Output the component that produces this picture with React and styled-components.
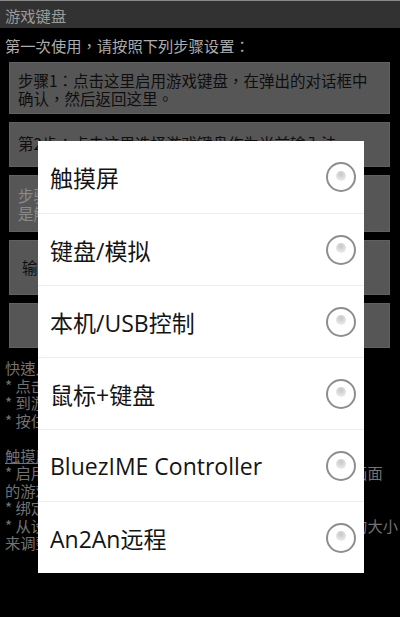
import React from "react";
import styled, { createGlobalStyle } from "styled-components";

const GlobalStyle = createGlobalStyle`
  html, body { margin: 0; padding: 0; background: #000; }
  body { font-family: "Noto Sans CJK TC", "Noto Sans", sans-serif; }
  * { box-sizing: border-box; }
`;

const Page = styled.div`
  position: relative;
  width: 400px;
  height: 617px;
  background: #000;
  overflow: hidden;
`;

const TitleBar = styled.div`
  height: 28px;
  background: #323232;
  border-top: 1px solid #8a8a8a;
  display: flex;
  align-items: center;
  padding-left: 5px;
  color: #9a9a9a;
  font-size: 15.3px;
`;

const Content = styled.div`
  padding: 0 10px 0 5px;
`;

const Intro = styled.div`
  margin-top: 8px;
  line-height: 18px;
  font-size: 15.3px;
  color: #acacac;
  white-space: nowrap;
`;

const StepList = styled.div`
  margin: 8px 0 0 4px;
  display: flex;
  flex-direction: column;
  gap: 8px;
`;

const StepBox = styled.div`
  background: #565656;
  border: 1px solid #616161;
  padding: ${(p) => p.$pad};
  min-height: ${(p) => p.$h}px;
  font-size: 15.5px;
  line-height: 18px;
  color: ${(p) => (p.$disabled ? "#8a8a8a" : "#0e0e0e")};
  text-align: ${(p) => (p.$center ? "center" : "left")};
  white-space: nowrap;
  overflow: hidden;
`;

const Help = styled.div`
  margin-top: 11px;
  font-size: 15.3px;
  line-height: 17.5px;
  color: #727272;
`;

const HelpLine = styled.div`
  white-space: nowrap;
  height: 17.5px;
  text-decoration: ${(p) => (p.$underline ? "underline" : "none")};
`;

const Dialog = styled.div`
  position: absolute;
  top: 141px;
  left: 38px;
  width: 326px;
  background: #fff;
  display: flex;
  flex-direction: column;
`;

const Option = styled.div`
  height: 72px;
  display: flex;
  align-items: center;
  justify-content: space-between;
  padding: 0 8px 0 12px;
  border-top: ${(p) => (p.$first ? "none" : "1px solid #ededed")};
  font-family: "Open Sans", "Noto Sans CJK SC", sans-serif;
  font-size: 23px;
  color: #141414;
`;

const Radio = styled.span`
  width: 30px;
  height: 30px;
  border-radius: 50%;
  border: 2px solid #8e8e8e;
  display: flex;
  align-items: center;
  justify-content: center;
  flex-shrink: 0;
  &::after {
    content: "";
    width: 10px;
    height: 10px;
    border-radius: 50%;
    margin-top: -3px;
    margin-left: -1px;
    background: radial-gradient(circle at 50% 30%, #c6c6c6 0%, #dedede 50%, #f6f6f6 100%);
  }
`;

const options = [
  "触摸屏",
  "键盘/模拟",
  "本机/USB控制",
  "鼠标+键盘",
  "BluezIME Controller",
  "An2An远程",
];

export default function App() {
  return (
    <Page>
      <GlobalStyle />
      <TitleBar>游戏键盘</TitleBar>
      <Content>
        <Intro>第一次使用，请按照下列步骤设置：</Intro>
        <StepList>
          <StepBox $pad="8px 8px 6px">
            步骤1：点击这里启用游戏键盘，在弹出的对话框中
            <br />
            确认，然后返回这里。
          </StepBox>
          <StepBox $pad="11px 8px 14px" $h={45}>
            第2步：点击这里选择游戏键盘作为当前输入法。
          </StepBox>
          <StepBox $pad="10px 8px 9px" $disabled>
            步骤3：（可选）点击这里设置默认的模式，一般
            <br />
            是触摸屏模式。
          </StepBox>
          <StepBox $pad="17px 12px 18px">输入法设置</StepBox>
          <StepBox $pad="12px 8px 13px" $center>
            更多设置
          </StepBox>
        </StepList>
        <Help>
          <HelpLine>快速入门：</HelpLine>
          <HelpLine>* 点击上方的按钮完成设置</HelpLine>
          <HelpLine>* 到游戏中长按输入框选择输入法</HelpLine>
          <HelpLine>* 按住菜单键可打开设置</HelpLine>
          <HelpLine />
          <HelpLine $underline>触摸屏模式：</HelpLine>
          <HelpLine>* 启用后，可以在屏幕上放置虚拟按键，覆盖在原来画面</HelpLine>
          <HelpLine>的游戏上。</HelpLine>
          <HelpLine>* 绑定按键到屏幕上的位置</HelpLine>
          <HelpLine>* 从设置菜单中可以调整按键的透明度、位置和按键的大小</HelpLine>
          <HelpLine>来调整到合适的位置。</HelpLine>
        </Help>
      </Content>
      <Dialog>
        {options.map((o, i) => (
          <Option key={o} $first={i === 0}>
            <span>{o}</span>
            <Radio />
          </Option>
        ))}
      </Dialog>
    </Page>
  );
}
